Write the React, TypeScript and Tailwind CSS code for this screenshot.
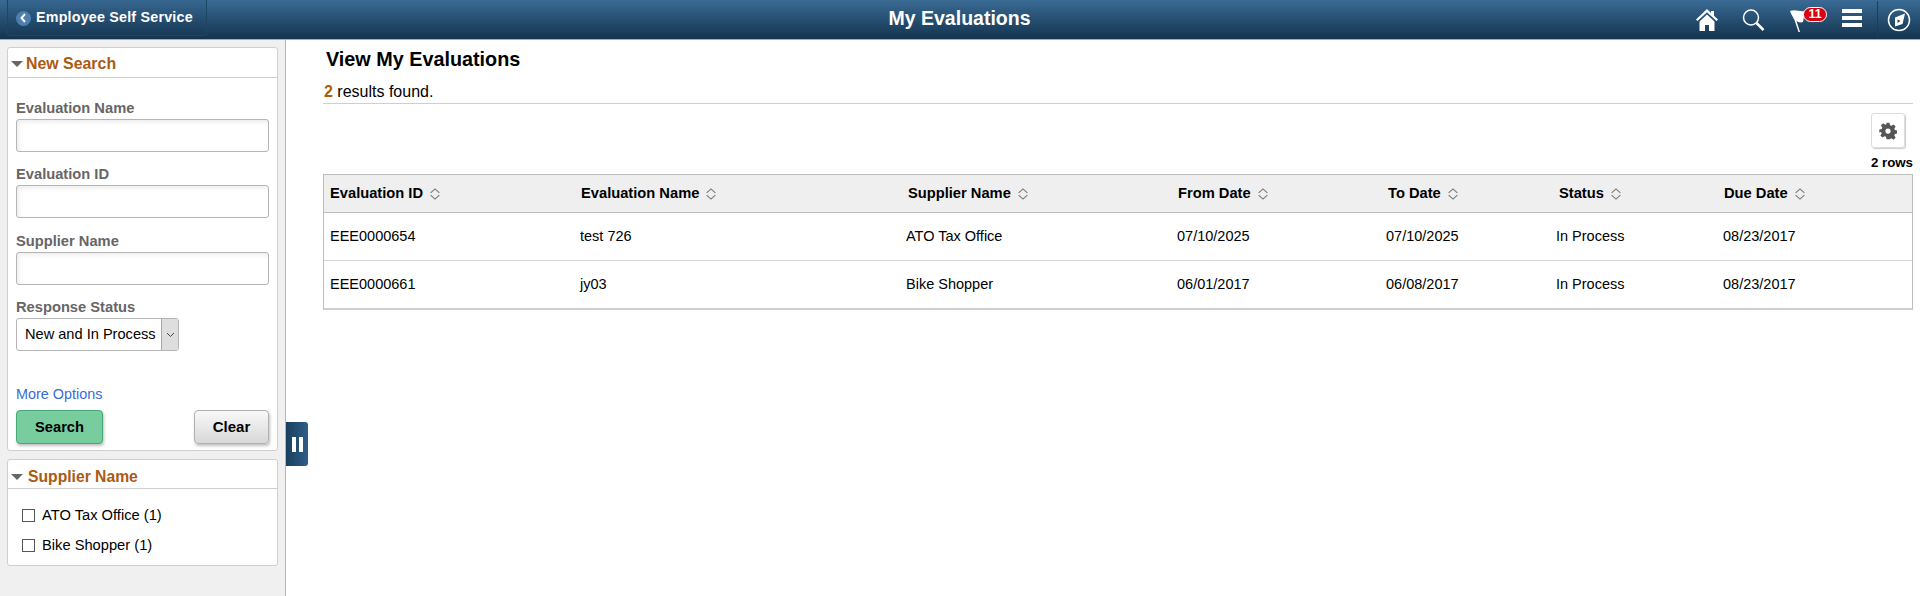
import React from "react";

const Sort = () => (
  <svg width="12" height="12" viewBox="0 0 11 11" className="inline-block ml-[6px] mb-[1px]" fill="none" stroke="#777" strokeWidth="1">
    <path d="M1.500 4.500 5.500 0.800 9.500 4.500M1.500 6.500 5.500 10.200 9.500 6.500" />
  </svg>
);

const Caret = () => (
  <span className="w-0 h-0 border-l-[6px] border-r-[6px] border-t-[6px] border-l-transparent border-r-transparent border-t-[#666]" />
);

const Field = ({ label, mt }: { label: string; mt: string }) => (
  <div className={mt}>
    <div className="text-[14.700px] leading-[16px] font-bold text-[#666]">{label}</div>
    <div className="mt-[3px] h-[33px] rounded-[3px] border border-[#b5b5b5] bg-white shadow-[inset_2px_2px_4px_rgba(0,0,0,0.08)]" />
  </div>
);

const headers = [
  ["Evaluation ID", "w-[251px]"],
  ["Evaluation Name", "w-[327px]"],
  ["Supplier Name", "w-[270px]"],
  ["From Date", "w-[210px]"],
  ["To Date", "w-[171px]"],
  ["Status", "w-[165px]"],
  ["Due Date", "flex-1"],
];
const rowOffsets = ["w-[250px]", "w-[326px]", "w-[271px]", "w-[209px]", "w-[170px]", "w-[167px]", "flex-1"];
const rows = [
  ["EEE0000654", "test 726", "ATO Tax Office", "07/10/2025", "07/10/2025", "In Process", "08/23/2017"],
  ["EEE0000661", "jy03", "Bike Shopper", "06/01/2017", "06/08/2017", "In Process", "08/23/2017"],
];

export default function App() {
  return (
    <div className="h-[596px] w-[1920px] overflow-hidden bg-white font-['Liberation_Sans',Arial,sans-serif] text-black flex flex-col relative">
      <header className="h-[40px] shrink-0 flex items-stretch border-b border-[#8db2d6] bg-gradient-to-b from-[#3a6b95] to-[#14344f] relative">
        <div className="ml-[7px] w-[200px] h-[36px] rounded-b-[3px] border border-t-0 border-[#1d4564] bg-gradient-to-b from-[#376790] to-[#183a57] flex items-center pl-[8px] pt-[1px] text-white">
          <span className="w-[15px] h-[15px] rounded-full bg-[#4b7fae] flex items-center justify-center">
            <svg width="9" height="10" viewBox="0 0 9 10" fill="none" stroke="#fff" strokeWidth="2"><path d="M6 1 2.500 5 6 9" /></svg>
          </span>
          <span className="ml-[5px] text-[14.300px] font-bold tracking-[0.2px] whitespace-nowrap">Employee Self Service</span>
        </div>
        <div className="absolute inset-0 flex items-center justify-center pr-[1px] pb-[2px] text-white text-[19.500px] font-bold">My Evaluations</div>
        <div className="absolute right-0 top-0 h-[39px] flex items-center">
          <svg width="24" height="24" viewBox="0 0 24 24" fill="#fff" className="mr-[22px]">
            <path d="M12 1 1 11.500l1.500 1.500L12 4.200l9.500 8.800L23 11.500l-4-3.800V3h-3v1.900zM4.500 13.500V23H10v-6h4v6h5.500v-9.500L12 6.500z" />
          </svg>
          <svg width="24" height="24" viewBox="0 0 24 24" fill="none" stroke="#fff" className="mr-[25px]">
            <circle cx="10" cy="9.500" r="7.500" strokeWidth="1.500" />
            <path d="m15.500 15 7 7" strokeWidth="2.500" />
          </svg>
          <div className="relative w-[36px] h-[26px] mr-[16px]">
            <svg width="20" height="26" viewBox="0 0 20 26" fill="#fff" className="absolute left-0 top-[2px]">
              <path d="M0 2C5 0 10 3 15 2L13 13C10 14 8 13 6.500 12L10 23H8.500L4.500 11C3 8 1 5 0 2z" />
            </svg>
            <span className="absolute left-[13px] top-[0px] w-[24px] h-[15px] rounded-full bg-[#d9000f] border border-white text-white text-[12.500px] leading-[13px] font-bold text-center">11</span>
          </div>
          <div className="w-[20px] flex flex-col gap-[3px] mr-[15px] mb-[3px]">
            <span className="h-[4px] bg-white" />
            <span className="h-[4px] bg-white" />
            <span className="h-[4px] bg-white" />
          </div>
          <div className="w-[43px] h-[38px] border-l border-[#1b3d5a] flex items-center justify-center">
            <svg width="24" height="24" viewBox="0 0 24 24" fill="none">
              <circle cx="12" cy="12" r="10.500" stroke="#fff" strokeWidth="1.500" />
              <path d="M8 9.500 18 5.500 15.500 16 8 18.500z" fill="#fff" />
              <path d="M10.500 11.500 13.500 13 10.500 15z" fill="#1d4160" />
            </svg>
          </div>
        </div>
      </header>

      <div className="flex-1 flex min-h-0">
        <aside className="w-[286px] shrink-0 bg-[#f0f0f0] border-r border-[#b5b5b5] pl-[7px] pr-[7px] pt-[7px]">
          <section className="h-[404px] rounded-[3px] border border-[#cfcfcf] bg-white flex flex-col">
            <div className="h-[30px] border-b border-[#cfcfcf] flex items-center pl-[3px] pt-[2px]">
              <Caret />
              <span className="ml-[3px] text-[15.900px] font-bold text-[#ab5a13]">New Search</span>
            </div>
            <div className="px-[8px] flex-1 flex flex-col">
              <Field label="Evaluation Name" mt="mt-[22px]" />
              <Field label="Evaluation ID" mt="mt-[14px]" />
              <Field label="Supplier Name" mt="mt-[15px]" />
              <div className="mt-[14px]">
                <div className="text-[14.700px] leading-[16px] font-bold text-[#666]">Response Status</div>
                <div className="mt-[3px] w-[163px] h-[33px] rounded-[3px] border border-[#b5b5b5] flex overflow-hidden bg-white">
                  <span className="flex-1 pl-[8px] text-[14.600px] leading-[31px] whitespace-nowrap">New and In Process</span>
                  <span className="w-[17px] bg-[#dedede] border-l border-[#a8a8a8] flex items-center justify-center">
                    <svg width="9" height="6" viewBox="0 0 9 6" fill="none" stroke="#444"><path d="m1 1 3.500 3.500L8 1" /></svg>
                  </span>
                </div>
              </div>
              <a className="mt-[35px] text-[14.400px] leading-[16px] text-[#3a6bd8]">More Options</a>
              <div className="mt-[8px] flex justify-between">
                <button className="w-[87px] h-[34px] rounded-[4px] border border-[#46a878] bg-[#78cd9f] text-[14.700px] font-bold shadow-[1px_2px_3px_rgba(0,0,0,0.25)] pt-[1px]">Search</button>
                <button className="w-[75px] h-[34px] rounded-[4px] border border-[#b0b0b0] bg-gradient-to-b from-[#f8f8f8] to-[#d8d8d8] text-[15px] font-bold shadow-[1px_2px_3px_rgba(0,0,0,0.25)] pt-[1px]">Clear</button>
              </div>
            </div>
          </section>
          <section className="mt-[8px] h-[107px] rounded-[3px] border border-[#cfcfcf] bg-white">
            <div className="h-[29px] border-b border-[#cfcfcf] flex items-center pl-[3px] pt-[6px]">
              <Caret />
              <span className="ml-[5px] text-[15.700px] font-bold text-[#ab5a13]">Supplier Name</span>
            </div>
            <div className="pl-[14px] pt-[20px] flex flex-col gap-[17px] text-[14.700px] leading-[13px]">
              {["ATO Tax Office (1)", "Bike Shopper (1)"].map((t) => (
                <label key={t} className="flex items-center">
                  <span className="w-[13px] h-[13px] border border-[#555] bg-white" />
                  <span className="ml-[7px]">{t}</span>
                </label>
              ))}
            </div>
          </section>
        </aside>

        <main className="flex-1 min-w-0 pl-[37px] pr-[7px]">
          <h1 className="mt-[9px] pl-[3px] text-[19.800px] leading-[20px] font-bold">View My Evaluations</h1>
          <div className="mt-[14px] pb-[3px] text-[16px] leading-[17px] border-b border-[#cfcfcf] pl-[1px]">
            <span className="font-bold text-[#ab5a13]">2</span> results found.
          </div>
          <div className="flex justify-end mt-[9px]">
            <div className="w-[34px] h-[35px] mr-[8px] rounded-[3px] border border-[#dcdcdc] shadow-[1px_1px_1px_rgba(0,0,0,0.2)] flex items-center justify-center">
              <svg width="18" height="18" viewBox="0 0 24 24" fill="#555">
                <path fillRule="evenodd" d="M10 1h4l.7 3.200 1.900.8 2.800-1.800 2.800 2.800-1.800 2.800.8 1.900 3.200.7v4l-3.200.7-.8 1.900 1.800 2.800-2.800 2.800-2.800-1.800-1.900.8L14 23h-4l-.7-3.200-1.900-.8-2.800 1.800-2.800-2.800 1.800-2.800-.8-1.900L.4 14v-4l3.200-.7.8-1.900-1.800-2.800 2.800-2.800 2.800 1.800 1.900-.8zM12 8.500a3.500 3.500 0 1 0 0 7 3.500 3.500 0 0 0 0-7z" />
              </svg>
            </div>
          </div>
          <div className="mt-[7px] text-right text-[13.300px] leading-[16px] font-bold">2 rows</div>
          <div className="mt-[3px] border border-[#bdbdbd] border-b-2 border-b-[#cfcfcf]">
            <div className="h-[38px] flex items-center bg-[#efefef] border-b border-[#bdbdbd] pl-[6px] text-[14.700px] font-bold">
              {headers.map(([h, w]) => (
                <div key={h} className={`${w} whitespace-nowrap`}>{h}<Sort /></div>
              ))}
            </div>
            {rows.map((r, i) => (
              <div key={i} className={`${i === 0 ? "h-[48px] border-b border-[#d5d5d5]" : "h-[47px]"} flex items-center pl-[6px] text-[14.500px]`}>
                {r.map((c, j) => (
                  <div key={j} className={`${rowOffsets[j]} whitespace-nowrap`}>{c}</div>
                ))}
              </div>
            ))}
          </div>
        </main>
      </div>

      <div className="absolute left-[286px] top-[422px] w-[22px] h-[44px] rounded-r-[3px] bg-gradient-to-r from-[#183f5f] to-[#2f5f87] flex items-center justify-center gap-[3px]">
        <span className="w-[4px] h-[15px] bg-white" />
        <span className="w-[4px] h-[15px] bg-white" />
      </div>
    </div>
  );
}
